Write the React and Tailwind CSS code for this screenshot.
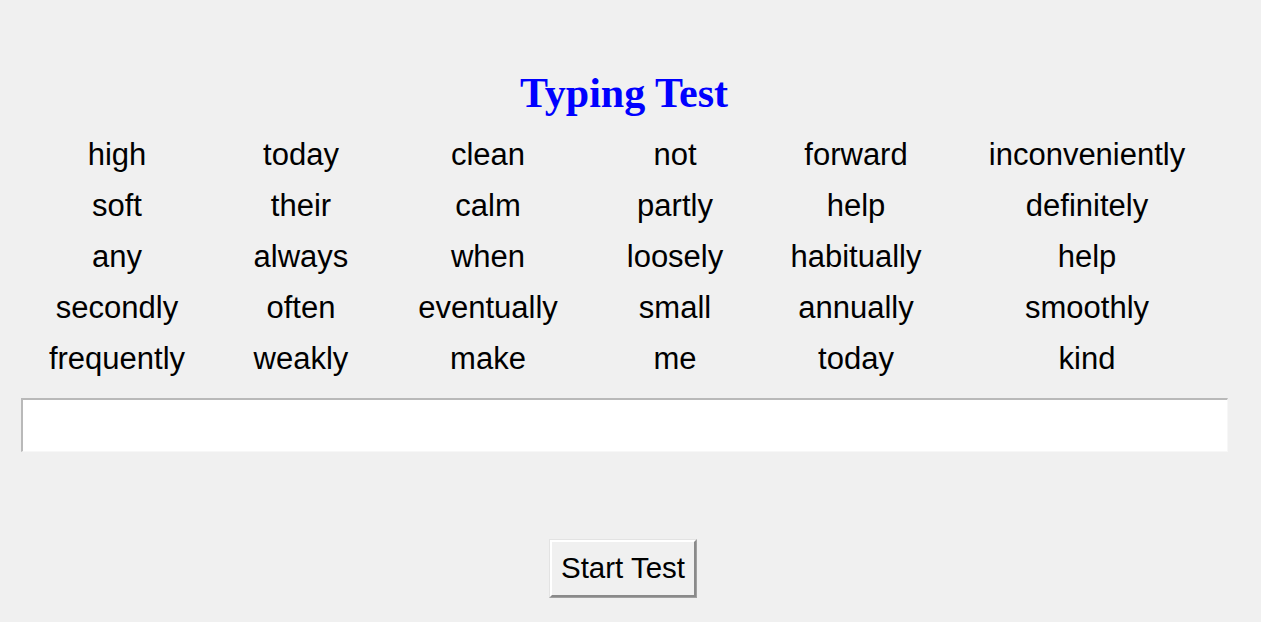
import React from "react";

const rows = [
  ["high", "today", "clean", "not", "forward", "inconveniently"],
  ["soft", "their", "calm", "partly", "help", "definitely"],
  ["any", "always", "when", "loosely", "habitually", "help"],
  ["secondly", "often", "eventually", "small", "annually", "smoothly"],
  ["frequently", "weakly", "make", "me", "today", "kind"],
];

export default function App() {
  return (
    <div className="h-[622px] w-full bg-[#f0f0f0] overflow-hidden pt-[71px]" style={{ fontFamily: '"Liberation Sans", Arial, sans-serif' }}>
      <h1
        className="w-[1248px] text-center text-[42px] leading-[44px] font-bold text-[#0000ff]"
        style={{ fontFamily: '"Liberation Serif", "Times New Roman", serif' }}
      >
        Typing Test
      </h1>
      <div className="mt-[14px] ml-[14px] grid grid-cols-[206px_162px_212px_162px_200px_262px] text-[31px] leading-[51px] text-black">
        {rows.map((r, i) =>
          r.map((w, j) => (
            <div key={i + "-" + j} className="text-center whitespace-nowrap">
              {w}
            </div>
          ))
        )}
      </div>
      <div className="mt-[14px] ml-[21px] w-[1207px] h-[54px] bg-white border-t-2 border-l-2 border-t-[#b9b9b9] border-l-[#b9b9b9] border-b border-r border-b-[#f7f7f7] border-r-[#f7f7f7]" />
      <div className="mt-[87px] ml-[549px] w-[148px] h-[59px] border border-t-[#e3e3e3] border-l-[#e3e3e3] border-b-[#a0a0a0] border-r-[#a0a0a0]">
        <button className="w-full h-full flex items-center justify-center bg-[#f0f0f0] text-[29.5px] text-black border-2 border-t-white border-l-white border-b-[#8a8a8a] border-r-[#8a8a8a]">
          Start Test
        </button>
      </div>
    </div>
  );
}
